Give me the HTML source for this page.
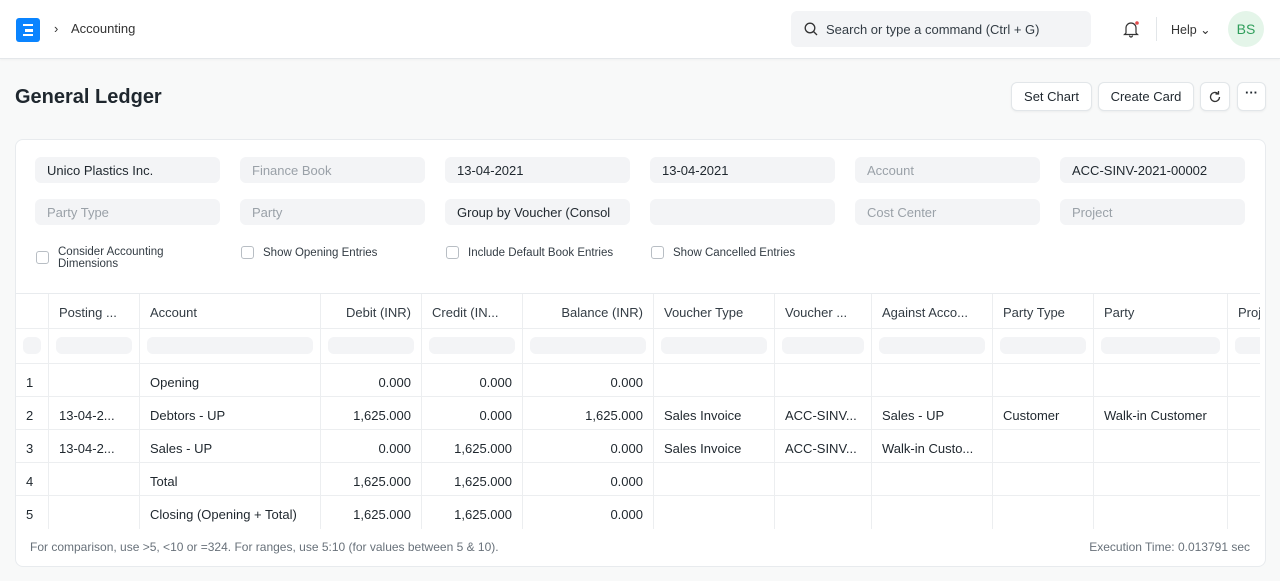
<!DOCTYPE html>
<html><head><style>
*{box-sizing:border-box;margin:0;padding:0}
body{width:1280px;height:581px;background:#f8f9f9;font-family:"Liberation Sans",sans-serif;color:#1f272e;position:relative;overflow:hidden;font-size:13px}
.nav{position:absolute;left:0;top:0;width:1280px;height:59px;background:#fff;border-bottom:1px solid #e4e7ea;box-shadow:0 1px 2px rgba(0,0,0,.04)}
.abs{position:absolute}
.btn{position:absolute;top:82px;height:29px;background:#fff;border:1px solid #e2e6e9;border-radius:6px;font-size:13px;line-height:27px;text-align:center;box-shadow:0 1px 2px rgba(0,0,0,.05)}
.card{position:absolute;left:15px;top:139px;width:1251px;height:428px;background:#fff;border:1px solid #e8ebee;border-radius:8px;overflow:hidden}
.f{position:absolute;width:185px;height:26px;background:#f3f4f6;border-radius:6px;font-size:13px;line-height:27px;padding-left:12px;color:#9aa1a8}
.f.v{color:#1f272e}
.cb{position:absolute;width:13px;height:13px;border:1px solid #b8bec4;border-radius:3px;background:#fff}
.cl{position:absolute;font-size:11.5px;color:#333c44;line-height:12px}
.tbl{position:absolute;left:0;top:153px;width:1244px;height:236px;overflow:hidden;border-top:1px solid #e8ebee}
.row{position:absolute;left:0;width:1300px;border-bottom:1px solid #eceef0}
.c{position:absolute;top:0;height:100%;border-right:1px solid #eceef0;padding:0 10px;white-space:nowrap;overflow:hidden;font-size:13px}
.r{text-align:right}
.pill{position:absolute;top:8px;left:7px;right:7px;height:17px;background:#f3f4f6;border-radius:6px}
</style></head><body>
<div class="nav">
 <div class="abs" style="left:16px;top:18px;width:24px;height:24px;background:#0a84ff;border-radius:3px"></div>
 <div class="abs" style="left:23px;top:24px;width:10px;height:12px;border:2.5px solid #fff;border-left:none;border-right:none"></div>
 <div class="abs" style="left:25px;top:29px;width:8px;height:2.5px;background:#fff"></div>
 <div class="abs" style="left:54px;top:21px;font-size:13px;color:#333">›</div>
 <div class="abs" style="left:71px;top:21px;font-size:13px;color:#333">Accounting</div>
 <div class="abs" style="left:791px;top:11px;width:300px;height:36px;background:#f3f4f6;border-radius:6px"></div>
 <svg class="abs" style="left:804px;top:22px" width="14" height="14" viewBox="0 0 14 14"><circle cx="6" cy="6" r="4.8" fill="none" stroke="#333" stroke-width="1.3"/><path d="M9.5 9.5L13 13" stroke="#333" stroke-width="1.3"/></svg>
 <div class="abs" style="left:826px;top:22px;font-size:13px;color:#333c44">Search or type a command (Ctrl + G)</div>
 <svg class="abs" style="left:1122px;top:20px" width="18" height="18" viewBox="0 0 18 18"><path d="M4 13V8a5 5 0 0 1 10 0v5l1.5 1.5h-13z M7.5 15.5a1.5 1.5 0 0 0 3 0" fill="none" stroke="#333" stroke-width="1.2"/><circle cx="15" cy="3" r="1.8" fill="#e24c4c"/></svg>
 <div class="abs" style="left:1156px;top:17px;width:1px;height:24px;background:#e2e6e9"></div>
 <div class="abs" style="left:1171px;top:22px;font-size:12.5px;color:#333">Help ⌄</div>
 <div class="abs" style="left:1228px;top:11px;width:36px;height:36px;border-radius:50%;background:#e4f5e9;color:#2f9e5b;font-size:14px;line-height:36px;text-align:center">BS</div>
</div>
<div class="abs" style="left:15px;top:86px;font-size:20px;font-weight:bold;color:#1f272e">General Ledger</div>
<div class="btn" style="left:1011px;width:81px">Set Chart</div>
<div class="btn" style="left:1098px;width:96px">Create Card</div>
<div class="btn" style="left:1200px;width:30px"><svg width="14" height="14" viewBox="0 0 14 14" style="margin-top:7px"><path d="M11.5 7A4.5 4.5 0 1 1 10 3.6M10.5 1v3h-3" fill="none" stroke="#333" stroke-width="1.3"/></svg></div>
<div class="btn" style="left:1237px;width:29px;line-height:20px;font-weight:bold">···</div>
<div class="card">
 <div class="f v" style="left:19px;top:17px">Unico Plastics Inc.</div>
 <div class="f" style="left:224px;top:17px">Finance Book</div>
 <div class="f v" style="left:429px;top:17px">13-04-2021</div>
 <div class="f v" style="left:634px;top:17px">13-04-2021</div>
 <div class="f" style="left:839px;top:17px">Account</div>
 <div class="f v" style="left:1044px;top:17px">ACC-SINV-2021-00002</div>
 <div class="f" style="left:19px;top:59px">Party Type</div>
 <div class="f" style="left:224px;top:59px">Party</div>
 <div class="f v" style="left:429px;top:59px">Group by Voucher (Consol</div>
 <div class="f" style="left:634px;top:59px"></div>
 <div class="f" style="left:839px;top:59px">Cost Center</div>
 <div class="f" style="left:1044px;top:59px">Project</div>
 <div class="cb" style="left:20px;top:111px"></div><div class="cl" style="left:42px;top:106px">Consider Accounting<br>Dimensions</div>
 <div class="cb" style="left:225px;top:106px"></div><div class="cl" style="left:247px;top:107px">Show Opening Entries</div>
 <div class="cb" style="left:430px;top:106px"></div><div class="cl" style="left:452px;top:107px">Include Default Book Entries</div>
 <div class="cb" style="left:635px;top:106px"></div><div class="cl" style="left:657px;top:107px">Show Cancelled Entries</div>
 <div class="tbl">
  <div class="row" style="top:0;height:35px;line-height:38px;color:#333c44">
   <div class="c" style="left:0;width:33px"></div><div class="c" style="left:33px;width:91px">Posting ...</div><div class="c" style="left:124px;width:181px">Account</div><div class="c r" style="left:305px;width:101px">Debit (INR)</div><div class="c" style="left:406px;width:101px">Credit (IN...</div><div class="c r" style="left:507px;width:131px">Balance (INR)</div><div class="c" style="left:638px;width:121px">Voucher Type</div><div class="c" style="left:759px;width:97px">Voucher ...</div><div class="c" style="left:856px;width:121px">Against Acco...</div><div class="c" style="left:977px;width:101px">Party Type</div><div class="c" style="left:1078px;width:134px">Party</div><div class="c" style="left:1212px;width:80px">Proj</div>
  </div>
  <div class="row" style="top:35px;height:35px">
   <div class="c" style="left:0;width:33px"><div class="pill"></div></div><div class="c" style="left:33px;width:91px"><div class="pill"></div></div><div class="c" style="left:124px;width:181px"><div class="pill"></div></div><div class="c" style="left:305px;width:101px"><div class="pill"></div></div><div class="c" style="left:406px;width:101px"><div class="pill"></div></div><div class="c" style="left:507px;width:131px"><div class="pill"></div></div><div class="c" style="left:638px;width:121px"><div class="pill"></div></div><div class="c" style="left:759px;width:97px"><div class="pill"></div></div><div class="c" style="left:856px;width:121px"><div class="pill"></div></div><div class="c" style="left:977px;width:101px"><div class="pill"></div></div><div class="c" style="left:1078px;width:134px"><div class="pill"></div></div><div class="c" style="left:1212px;width:80px"><div class="pill"></div></div>
  </div>
  <div class="row" style="top:70px;height:33px;line-height:38px">
   <div class="c" style="left:0;width:33px">1</div><div class="c" style="left:33px;width:91px"></div><div class="c" style="left:124px;width:181px">Opening</div><div class="c r" style="left:305px;width:101px">0.000</div><div class="c r" style="left:406px;width:101px">0.000</div><div class="c r" style="left:507px;width:131px">0.000</div><div class="c" style="left:638px;width:121px"></div><div class="c" style="left:759px;width:97px"></div><div class="c" style="left:856px;width:121px"></div><div class="c" style="left:977px;width:101px"></div><div class="c" style="left:1078px;width:134px"></div><div class="c" style="left:1212px;width:80px"></div>
  </div>
  <div class="row" style="top:103px;height:33px;line-height:38px">
   <div class="c" style="left:0;width:33px">2</div><div class="c" style="left:33px;width:91px">13-04-2...</div><div class="c" style="left:124px;width:181px">Debtors - UP</div><div class="c r" style="left:305px;width:101px">1,625.000</div><div class="c r" style="left:406px;width:101px">0.000</div><div class="c r" style="left:507px;width:131px">1,625.000</div><div class="c" style="left:638px;width:121px">Sales Invoice</div><div class="c" style="left:759px;width:97px">ACC-SINV...</div><div class="c" style="left:856px;width:121px">Sales - UP</div><div class="c" style="left:977px;width:101px">Customer</div><div class="c" style="left:1078px;width:134px">Walk-in Customer</div><div class="c" style="left:1212px;width:80px"></div>
  </div>
  <div class="row" style="top:136px;height:33px;line-height:38px">
   <div class="c" style="left:0;width:33px">3</div><div class="c" style="left:33px;width:91px">13-04-2...</div><div class="c" style="left:124px;width:181px">Sales - UP</div><div class="c r" style="left:305px;width:101px">0.000</div><div class="c r" style="left:406px;width:101px">1,625.000</div><div class="c r" style="left:507px;width:131px">0.000</div><div class="c" style="left:638px;width:121px">Sales Invoice</div><div class="c" style="left:759px;width:97px">ACC-SINV...</div><div class="c" style="left:856px;width:121px">Walk-in Custo...</div><div class="c" style="left:977px;width:101px"></div><div class="c" style="left:1078px;width:134px"></div><div class="c" style="left:1212px;width:80px"></div>
  </div>
  <div class="row" style="top:169px;height:33px;line-height:38px">
   <div class="c" style="left:0;width:33px">4</div><div class="c" style="left:33px;width:91px"></div><div class="c" style="left:124px;width:181px">Total</div><div class="c r" style="left:305px;width:101px">1,625.000</div><div class="c r" style="left:406px;width:101px">1,625.000</div><div class="c r" style="left:507px;width:131px">0.000</div><div class="c" style="left:638px;width:121px"></div><div class="c" style="left:759px;width:97px"></div><div class="c" style="left:856px;width:121px"></div><div class="c" style="left:977px;width:101px"></div><div class="c" style="left:1078px;width:134px"></div><div class="c" style="left:1212px;width:80px"></div>
  </div>
  <div class="row" style="top:202px;height:34px;line-height:38px">
   <div class="c" style="left:0;width:33px">5</div><div class="c" style="left:33px;width:91px"></div><div class="c" style="left:124px;width:181px">Closing (Opening + Total)</div><div class="c r" style="left:305px;width:101px">1,625.000</div><div class="c r" style="left:406px;width:101px">1,625.000</div><div class="c r" style="left:507px;width:131px">0.000</div><div class="c" style="left:638px;width:121px"></div><div class="c" style="left:759px;width:97px"></div><div class="c" style="left:856px;width:121px"></div><div class="c" style="left:977px;width:101px"></div><div class="c" style="left:1078px;width:134px"></div><div class="c" style="left:1212px;width:80px"></div>
  </div>
 </div>
 <div class="abs" style="left:14px;top:400px;font-size:12px;color:#68717a">For comparison, use &gt;5, &lt;10 or =324. For ranges, use 5:10 (for values between 5 &amp; 10).</div>
 <div class="abs" style="right:15px;top:400px;font-size:12px;color:#68717a">Execution Time: 0.013791 sec</div>
</div>
</body></html>
